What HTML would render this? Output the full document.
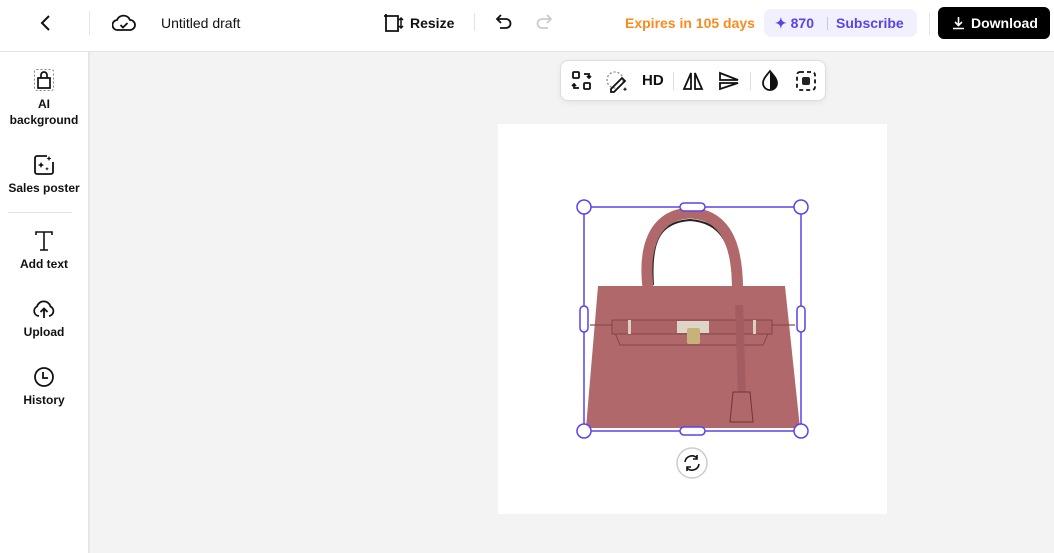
<!DOCTYPE html>
<html><head><meta charset="utf-8"><style>
*{box-sizing:border-box;margin:0;padding:0}
body{width:1054px;height:553px;overflow:hidden;background:#f3f3f3;font-family:"Liberation Sans",sans-serif;color:#111;position:relative}
.hdr{position:absolute;left:0;top:0;width:1054px;height:52px;background:#fff;border-bottom:1px solid #e4e4e4}
.abs{position:absolute}
.side{position:absolute;left:0;top:52px;width:90px;height:501px;background:#fff;border-right:2px solid #e6e6e6}
.item{position:absolute;left:0;width:88px;text-align:center;font-size:12px;font-weight:bold;line-height:16px}
.item svg{display:block;margin:0 auto 4px}
</style></head><body>
<div class="hdr">
 <svg class="abs" style="left:37px;top:14px" width="16" height="18" viewBox="0 0 16 18"><path d="M12 2 L5 9 L12 16" fill="none" stroke="#111" stroke-width="2"/></svg>
 <div class="abs" style="left:89px;top:11px;width:1px;height:24px;background:#e4e4e4"></div>
 <svg class="abs" style="left:112px;top:12px" width="24" height="22" viewBox="0 0 24 22"><path d="M6 18 A5 5 0 0 1 5 8 A7 7 0 0 1 18 8 A5 5 0 0 1 18 18 Z" fill="none" stroke="#111" stroke-width="1.8"/><path d="M8.5 13 L11 15.5 L15.5 11" fill="none" stroke="#111" stroke-width="1.8"/></svg>
 <div class="abs" style="left:161px;top:15px;font-size:14px">Untitled draft</div>
 <svg class="abs" style="left:383px;top:13px" width="22" height="20" viewBox="0 0 22 20"><path d="M3 1v17h13M1 3h14v15" fill="none" stroke="#111" stroke-width="1.8"/><path d="M18 5v10M16 7l2-2 2 2M16 13l2 2 2-2" fill="none" stroke="#111" stroke-width="1.5"/></svg>
 <div class="abs" style="left:410px;top:15px;font-size:14px;font-weight:bold">Resize</div>
 <div class="abs" style="left:474px;top:13px;width:1px;height:18px;background:#e4e4e4"></div>
 <svg class="abs" style="left:495px;top:13px" width="18" height="18" viewBox="0 0 18 18"><path d="M6 2 L2 6 L6 10 M2 6 H11 A4.5 4.5 0 0 1 11 15 H5" fill="none" stroke="#111" stroke-width="1.8"/></svg>
 <svg class="abs" style="left:535px;top:13px" width="18" height="18" viewBox="0 0 18 18"><path d="M12 2 L16 6 L12 10 M16 6 H7 A4.5 4.5 0 0 0 7 15 H13" fill="none" stroke="#ccc" stroke-width="1.8"/></svg>
 <div class="abs" style="left:625px;top:15px;font-size:14px;font-weight:bold;color:#fb8a1e">Expires in 105 days</div>
 <div class="abs" style="left:764px;top:9px;width:153px;height:28px;border-radius:7px;background:#f1f0fe;color:#5b43e6;font-size:14px;font-weight:bold;line-height:28px">
  <span style="position:absolute;left:11px">✦ 870</span><span style="position:absolute;left:63px;top:8px;width:1px;height:13px;background:#c9c3f2"></span><span style="position:absolute;left:72px">Subscribe</span></div>
 <div class="abs" style="left:929px;top:13px;width:1px;height:22px;background:#e4e4e4"></div>
 <div class="abs" style="left:938px;top:7px;width:112px;height:32px;border-radius:6px;background:#000;color:#fff;font-size:14px;font-weight:bold;line-height:32px">
  <svg style="position:absolute;left:14px;top:9px" width="13" height="14" viewBox="0 0 13 14"><path d="M6.5 1v8M3 6l3.5 3.5L10 6M1 12.5h11" fill="none" stroke="#fff" stroke-width="1.6"/></svg>
  <span style="position:absolute;left:33px">Download</span></div>
</div>
<div class="side">
 <div class="item" style="top:16px"><svg width="22" height="24" viewBox="0 0 22 24"><rect x="1.5" y="1.5" width="19" height="21" rx="2" fill="none" stroke="#888" stroke-dasharray="2 2"/><path d="M5 20V10h12v10z M8 10V7a3 3 0 0 1 6 0v3" fill="none" stroke="#111" stroke-width="1.7"/></svg>AI<br>background</div>
 <div class="item" style="top:102px"><svg width="22" height="22" viewBox="0 0 22 22"><path d="M14 2H4a2 2 0 0 0-2 2v14a2 2 0 0 0 2 2h14a2 2 0 0 0 2-2V8" fill="none" stroke="#111" stroke-width="1.8"/><path d="M8 8l1 2 2 1-2 1-1 2-1-2-2-1 2-1zM14 13l.6 1.2 1.2.6-1.2.6-.6 1.2-.6-1.2-1.2-.6 1.2-.6zM16 2l.8 1.7 1.7.8-1.7.8-.8 1.7-.8-1.7-1.7-.8 1.7-.8z" fill="#111"/></svg>Sales poster</div>
 <div style="position:absolute;left:8px;top:160px;width:64px;height:1px;background:#e2e2e2"></div>
 <div class="item" style="top:178px"><svg width="20" height="22" viewBox="0 0 20 22"><path d="M2 5V2h16v3M10 2v18M6 20h8" fill="none" stroke="#111" stroke-width="1.6"/></svg>Add text</div>
 <div class="item" style="top:246px"><svg width="24" height="22" viewBox="0 0 24 22"><path d="M7 18A5 5 0 0 1 5 8.5a7 7 0 0 1 13.5 0A5 5 0 0 1 17 18" fill="none" stroke="#111" stroke-width="1.8"/><path d="M12 20v-9M8.5 14l3.5-3.5 3.5 3.5" fill="none" stroke="#111" stroke-width="1.8"/></svg>Upload</div>
 <div class="item" style="top:314px"><svg width="22" height="22" viewBox="0 0 22 22"><circle cx="11" cy="11" r="9" fill="none" stroke="#111" stroke-width="1.8"/><path d="M10 6v6h5" fill="none" stroke="#111" stroke-width="1.8"/></svg>History</div>
</div>
<div class="abs" style="left:560px;top:60px;width:266px;height:41px;background:#fff;border:1px solid #ddd;border-radius:8px;box-shadow:0 2px 6px rgba(0,0,0,.06)">
 <svg class="abs" style="left:10px;top:9px" width="22" height="22" viewBox="0 0 22 22" fill="none" stroke="#111" stroke-width="1.8"><rect x="2" y="2" width="6" height="6" rx="1"/><rect x="13" y="13" width="6" height="6" rx="1"/><path d="M13 4h5v4M16 6l2 2 2-2M8 18H3v-4M1 16l2-2 2 2"/></svg>
 <svg class="abs" style="left:44px;top:9px" width="24" height="24" viewBox="0 0 24 24" fill="none" stroke="#111" stroke-width="1.8"><circle cx="10" cy="10" r="8" stroke="#888" stroke-width="1.3" stroke-dasharray="2 2"/><path d="M6 19l11-11 3 3-11 11-3 0z"/><path d="M20 17l.7 1.5 1.5.7-1.5.7-.7 1.5-.7-1.5-1.5-.7 1.5-.7z" fill="#111" stroke="none"/></svg>
 <div class="abs" style="left:81px;top:11px;font-size:15px;font-weight:bold">HD</div>
 <div class="abs" style="left:112px;top:11px;width:1px;height:18px;background:#ddd"></div>
 <svg class="abs" style="left:121px;top:10px" width="22" height="20" viewBox="0 0 22 20" fill="none" stroke="#111" stroke-width="1.8"><path d="M9 2L2 18h7zM13 2l7 16h-7z"/></svg>
 <svg class="abs" style="left:157px;top:10px" width="22" height="20" viewBox="0 0 22 20" fill="none" stroke="#111" stroke-width="1.8"><path d="M2 2l18 7H2zM2 12h18L2 18z"/></svg>
 <div class="abs" style="left:189px;top:11px;width:1px;height:18px;background:#ddd"></div>
 <svg class="abs" style="left:199px;top:8px" width="20" height="24" viewBox="0 0 20 24"><path d="M10 2C6 7 3 10 3 14a7 7 0 0 0 14 0c0-4-3-7-7-12z" fill="none" stroke="#111" stroke-width="1.8"/><path d="M10 3v18a7 7 0 0 0 7-7c0-4-3-7-7-11z" fill="#111"/></svg>
 <svg class="abs" style="left:234px;top:9px" width="22" height="22" viewBox="0 0 22 22"><rect x="2" y="2" width="18" height="18" rx="3" fill="none" stroke="#111" stroke-width="1.8" stroke-dasharray="4 3"/><rect x="7" y="7" width="8" height="8" rx="2" fill="#222"/></svg>
</div>
<div class="abs" style="left:498px;top:124px;width:389px;height:390px;background:#fff"></div>
<svg class="abs" style="left:570px;top:195px" width="245" height="290" viewBox="570 195 245 290">
 <path d="M653 285 C650 240 660 222 690 220 C722 222 733 245 733 285" fill="none" stroke="#222" stroke-width="2"/>
 <path d="M650 300 C642 258 648 215 690 213 C733 215 740 258 737 310" fill="none" stroke="#b0686b" stroke-width="11"/>
 <path d="M598 286 L785 286 L800 428 L586 428 Z" fill="#b0686b"/>
 <path d="M590 325 L612 325 L620 345 L763 345 L772 325 L795 325" fill="none" stroke="#8d4b4e" stroke-width="1.2"/>
 <rect x="612" y="320" width="160" height="14" fill="#ab6366" stroke="#7a3d40" stroke-width="0.8"/>
 <rect x="677" y="321" width="32" height="12" fill="#ddd6c8"/>
 <rect x="687" y="328" width="13" height="16" rx="2" fill="#c9b27a"/>
 <rect x="628" y="320" width="3" height="14" fill="#d9d0bf"/><rect x="753" y="320" width="3" height="14" fill="#d9d0bf"/>
 <path d="M739 305 L742 395" stroke="#a35d60" stroke-width="8"/>
 <path d="M733 392 L750 392 L753 422 L730 422 Z" fill="#b0686b" stroke="#6e3538" stroke-width="1"/>
 <rect x="584" y="207" width="217" height="224" fill="none" stroke="#5a43e6" stroke-width="1.5"/>
 <g fill="#fff" stroke="#5a43e6" stroke-width="1.5">
  <circle cx="584" cy="207" r="7"/><circle cx="801" cy="207" r="7"/><circle cx="584" cy="431" r="7"/><circle cx="801" cy="431" r="7"/>
  <rect x="680" y="203" width="25" height="8" rx="4"/><rect x="680" y="427" width="25" height="8" rx="4"/>
  <rect x="580" y="306" width="8" height="26" rx="4"/><rect x="797" y="306" width="8" height="26" rx="4"/>
 </g>
 <circle cx="692" cy="463" r="15" fill="#fff" stroke="#ccc" stroke-width="1.5"/>
 <path d="M685 462a7 7 0 0 1 12-4M699 464a7 7 0 0 1-12 4" fill="none" stroke="#111" stroke-width="1.6"/>
 <path d="M697 455v4h-4M687 471v-4h4" fill="none" stroke="#111" stroke-width="1.6"/>
</svg>
</body></html>
